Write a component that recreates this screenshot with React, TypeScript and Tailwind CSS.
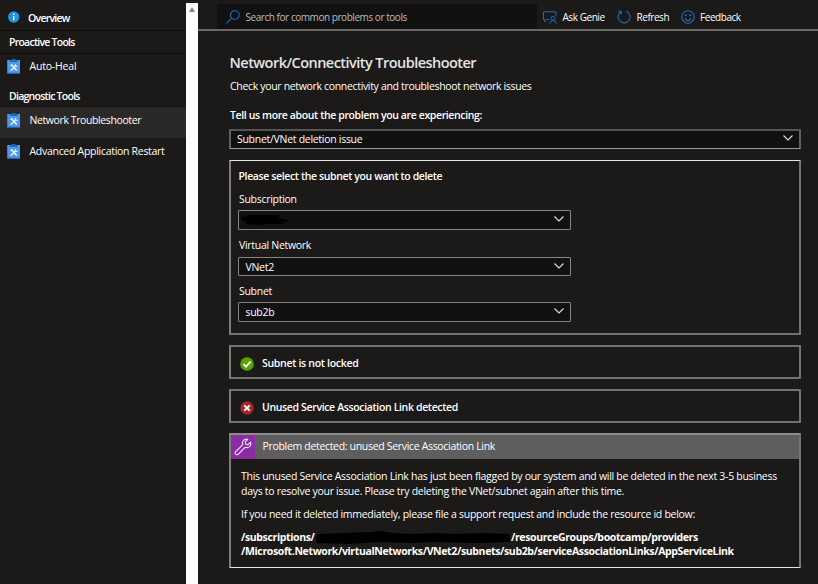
import React from "react";

const ui = "font-['Open_Sans','Noto_Sans',sans-serif]";

function ToolIcon() {
  return (
    <svg width="14" height="17" viewBox="0 0 14 17" className="block shrink-0">
      <rect x="0" y="2" width="13" height="14" fill="#4f98ee" />
      <rect x="0" y="2" width="1" height="14" fill="#2f7fd8" />
      <rect x="0" y="14.8" width="13" height="1.2" fill="#2363ad" />
      <path d="M2.500 4V2.400L5 1.600Q6.500 -.2 8.200 1.600L10.700 2.400V4Z" fill="#1a6cc0" />
      <path d="M4.400 6.600L9.700 12.400" stroke="#f2f8ff" strokeWidth="1.500" />
      <path d="M9.200 7.400L3.700 12.700" stroke="#f2f8ff" strokeWidth="1.200" />
      <path d="M8.300 6v2.300h2.400M3.200 7.900l2-1.900" stroke="#e8f3ff" strokeWidth="1" fill="none" />
    </svg>
  );
}

function Chevron() {
  return (
    <svg width="10" height="6" viewBox="0 0 10 6" className="-mt-[2px] block shrink-0">
      <path d="M0.5 0.5L5 5L9.5 0.5" fill="none" stroke="#e0e0e0" strokeWidth="1.1" />
    </svg>
  );
}

function ToolRow({ label, spacing, className }: { label: string; spacing: string; className: string }) {
  return (
    <div className={`flex pl-[7px] ${className}`}>
      <ToolIcon />
      <span className={`ml-[8.5px] leading-4 ${spacing}`}>{label}</span>
    </div>
  );
}

function Select({ children, className }: { children?: React.ReactNode; className: string }) {
  return (
    <div className={`flex items-center justify-between rounded-[1px] bg-[#111111] pr-[6px] ${className}`}>
      <span>{children}</span>
      <Chevron />
    </div>
  );
}

const panel = "border-x-2 border-l-[#7c7c7c] border-r-[#727272]";
const statusPanel = "border-y-2 border-y-[#727272]";
const field = "border border-[#858585] pl-[6.500px]";

export default function App() {
  return (
    <div className={`flex h-[584px] w-[818px] overflow-hidden bg-[#1b1a19] text-[10.5px] leading-4 tracking-[-0.287px] whitespace-nowrap text-white ${ui}`}>
      <aside className="w-[186px] shrink-0">
        <div className="flex h-[31px] items-center border-b border-[#11100f] pt-[5px] pl-[8px] text-[10.500px] font-semibold">
          <svg width="12" height="12" viewBox="0 0 12 12" className="-mt-[2px] block">
            <circle cx="5.7" cy="6" r="5.7" fill="#2492dc" />
            <path d="M5.700 5v4.200M5.700 2.500v1.400" stroke="#fff" strokeWidth="1.4" />
          </svg>
          <span className="ml-[8px] tracking-[-0.74px]">Overview</span>
        </div>
        <div className="h-[23px] border-b border-[#11100f] pt-[3px] pl-[9px] text-[10.500px] font-semibold tracking-[-0.76px]">Proactive Tools</div>
        <ToolRow label="Auto-Heal" spacing="tracking-[-0.2px]" className="h-[30px] pt-[4px]" />
        <div className="h-[23px] border-b border-[#11100f] pt-[4px] pl-[9px] text-[10.500px] font-semibold tracking-[-0.74px]">Diagnostic Tools</div>
        <ToolRow label="Network Troubleshooter" spacing="tracking-[-0.4px]" className="h-[31px] bg-[#2a2928] pt-[4.500px]" />
        <ToolRow label="Advanced Application Restart" spacing="tracking-[-0.29px]" className="pt-[5px]" />
      </aside>

      <div className="mt-[3px] flex w-[12px] shrink-0 justify-center bg-[#fdfdfd] pt-[4px]">
        <div className="h-0 w-0 border-x-[3.5px] border-b-[5px] border-x-transparent border-b-[#858585]" />
      </div>

      <main className="flex-1">
        <header className="flex h-[31px] items-start border-b-2 border-[#696867] pt-[4px] pl-[19px]">
          <div className="flex h-[25px] w-[320px] items-center rounded-t-[1px] bg-[#111111] pl-[9px] text-[10px] text-[#bdbcbb]">
            <svg width="14" height="14" viewBox="0 0 14 14" className="block" fill="none" stroke="#1a62b3" strokeWidth="1.2">
              <circle cx="8.8" cy="5" r="4.3" />
              <path d="M5.8 8.1L.6 13.2" />
            </svg>
            <span className="ml-[5.500px] tracking-[-0.45px]">Search for common problems or tools</span>
          </div>
          <div className="flex h-[26px] items-center pl-[6px] text-[10px] tracking-[-0.45px]">
            <svg width="14" height="13" viewBox="0 0 14 13" className="block shrink-0" fill="none" stroke="#1a6cc4" strokeWidth="1">
              <path d="M6.3 8.5H4L1.8 10.8V8.5H.5V.8h12.4v4" />
              <circle cx="10" cy="7.3" r="2" />
              <path d="M6.8 12.6q.3-3.2 3.2-3.2t3.2 3.2" />
            </svg>
            <span className="ml-[5.500px] w-[42.500px]">Ask Genie</span>
            <svg width="14" height="14" viewBox="0 0 14 14" className="ml-[12px] block shrink-0" fill="none" stroke="#1a6cc4" strokeWidth="1.1">
              <path d="M9.2 1.3A6 6 0 1 1 4 1.7M1.2 1.2h3v3" />
            </svg>
            <span className="ml-[5.500px] w-[32px]">Refresh</span>
            <svg width="14" height="14" viewBox="0 0 14 14" className="ml-[12px] block shrink-0" fill="none" stroke="#1a6cc4" strokeWidth="1.1">
              <circle cx="7" cy="7" r="6.2" />
              <path d="M3.8 8.3q1 2.4 3.2 2.4t3.2-2.4" />
              <circle cx="4.8" cy="5.2" r=".5" fill="#1a6cc4" />
              <circle cx="9.2" cy="5.2" r=".5" fill="#1a6cc4" />
            </svg>
            <span className="ml-[5.500px]">Feedback</span>
          </div>
        </header>

        <div className="ml-[31px] w-[572px]">
          <h1 className="h-[47px] pt-[22px] pl-[0.500px] text-[14.5px] leading-5 font-semibold tracking-[-0.54px] text-[#e4e4e4]">Network/Connectivity Troubleshooter</h1>
          <p className="h-[29px] pl-[1px] tracking-[-0.33px]">Check your network connectivity and troubleshoot network issues</p>
          <p className="h-[22px] pl-[1px] font-semibold tracking-[-0.38px]">Tell us more about the problem you are experiencing:</p>
          <Select className="h-[20px] border-x-2 border-t-2 border-b border-x-[#606060] border-t-[#555555] border-b-[#999999] pb-[1px] pl-[6px]">Subnet/VNet deletion issue</Select>

          <section className={`mt-[11px] h-[175px] border-t border-b-2 pt-[7px] pl-[7px] ${panel} border-t-[#e6e6e6] border-b-[#727272]`}>
            <p className="h-[23px] pl-[0.500px] font-semibold tracking-[-0.375px]">Please select the subnet you want to delete</p>
            <p className="h-[19px] pl-[1px]">Subscription</p>
            <Select className={`h-[20px] w-[333px] ${field}`}>
              <svg width="48" height="12" viewBox="0 0 48 12" className="-ml-[5px] block">
                <path d="M0 3L8 1H38V4L47 6V7.500L42 8V10H24L20 11L5 10L4 7L0 6Z" fill="#000" />
              </svg>
            </Select>
            <p className="mt-[7px] h-[20px] pl-[1px]">Virtual Network</p>
            <Select className={`h-[19px] w-[333px] ${field}`}>VNet2</Select>
            <p className="mt-[7px] h-[19px] pl-[1px]">Subnet</p>
            <Select className={`h-[20px] w-[333px] ${field}`}>sub2b</Select>
          </section>

          <section className={`mt-[10px] flex h-[34px] items-center pl-[9px] font-semibold ${panel} ${statusPanel}`}>
            <svg width="14" height="14" viewBox="0 0 14 14" className="mt-[3px] block">
              <circle cx="7" cy="7" r="6.8" fill="#57a300" />
              <path d="M3.5 7.2L6 9.600L10.500 4.600" stroke="#fff" strokeWidth="1.8" fill="none" />
            </svg>
            <span className="mt-[2px] ml-[8px] tracking-[-0.3px]">Subnet is not locked</span>
          </section>

          <section className={`mt-[10px] flex h-[34px] items-center pl-[9px] font-semibold ${panel} ${statusPanel}`}>
            <svg width="14" height="14" viewBox="0 0 14 14" className="mt-[3px] block">
              <circle cx="7" cy="7" r="6.7" fill="#a4262c" />
              <path d="M4.300 4.300L9.700 9.700M9.700 4.300L4.300 9.700" stroke="#fff" strokeWidth="1.9" fill="none" />
            </svg>
            <span className="mt-[1px] ml-[8px] tracking-[-0.35px]">Unused Service Association Link detected</span>
          </section>

          <section className={`mt-[10px] h-[135px] border-t-2 border-b ${panel} border-t-[#8c8c8c] border-b-[#e6e6e6]`}>
            <div className="flex h-[24px] items-center bg-[#5e5e5e]">
              <div className="flex h-[24px] w-[24px] items-center justify-center bg-[#8a2da5]">
                <svg width="18" height="18" viewBox="0 0 18 18" className="block" fill="none" stroke="#f4e6f8" strokeWidth="1.1" strokeLinejoin="round">
                  <path d="M13.800 1.300L11.200 3.900L11.700 6.200L14 6.700L16.600 4.100Q17.500 7.200 15.200 8.900Q13.400 10.100 11.300 9.200L4.200 16.300Q2.900 17.300 1.700 16.200Q.7 15 1.700 13.700L8.800 6.600Q7.900 4.200 9.300 2.500Q11.200 .5 13.800 1.300Z" />
                </svg>
              </div>
              <span className="-mt-[3px] ml-[7.500px] tracking-[-0.32px]">Problem detected: unused Service Association Link</span>
            </div>
            <div className="pt-[10px] pl-[10px] leading-[15px]">
              <p>This unused Service Association Link has just been flagged by our system and will be deleted in the next 3-5 business</p>
              <p>days to resolve your issue. Please try deleting the VNet/subnet again after this time.</p>
              <p className="mt-[8px]">If you need it deleted immediately, please file a support request and include the resource id below:</p>
              <div className="mt-[8px] flex h-[14px] items-center font-bold tracking-[-0.37px]">
                <span className="w-[74px]">/subscriptions/</span>
                <svg width="196" height="13" viewBox="0 0 196 13" className="block shrink-0">
                  <path d="M1 3L28 2L56 1L63 0L79 2L96 3L118 2L139 3L170 2L195 3V11L162 12L118 11L97 12L64 11L34 13L1 12Z" fill="#000" />
                </svg>
                <span>/resourceGroups/bootcamp/providers</span>
              </div>
              <p className="font-bold tracking-[-0.365px]">/Microsoft.Network/virtualNetworks/VNet2/subnets/sub2b/serviceAssociationLinks/AppServiceLink</p>
            </div>
          </section>
        </div>
      </main>
    </div>
  );
}
